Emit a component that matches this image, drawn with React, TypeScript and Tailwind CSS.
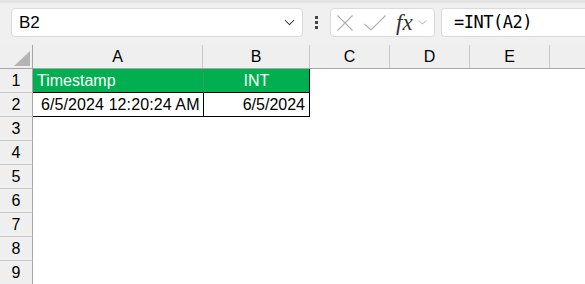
import { ChevronDown } from "lucide-react";

const cols = [
  { label: "A", w: "w-[170px]" },
  { label: "B", w: "w-[107px]" },
  { label: "C", w: "w-[80px]" },
  { label: "D", w: "w-[80px]" },
  { label: "E", w: "w-[80px]" },
];

export default function App() {
  const rows = [3, 4, 5, 6, 7, 8, 9];

  return (
    <div className="w-[585px] h-[284px] overflow-hidden bg-white font-['Liberation_Sans',Arial,sans-serif] text-black">
      {/* formula bar */}
      <div className="h-[45px] bg-[#f0f0f0] border-t-[3px] border-[#e4e4e4] flex items-start pt-[5px] pl-[11px]">
        <div className="w-[292px] h-[29px] bg-white rounded-[4px] border border-[#dadada] flex items-center pl-[7px] pr-[4px]">
          <span className="text-[17px] flex-1">B2</span>
          <ChevronDown size={17} strokeWidth={1.5} className="text-[#444]" />
        </div>
        <div className="w-[27px] h-[29px] flex items-center justify-center">
          <span className="flex flex-col gap-[2px]">
            <span className="w-[3px] h-[3px] bg-[#444]" />
            <span className="w-[3px] h-[3px] bg-[#444]" />
            <span className="w-[3px] h-[3px] bg-[#444]" />
          </span>
        </div>
        <div className="w-[105px] h-[29px] bg-white rounded-[4px] border border-[#dadada] flex items-center pl-[6px]">
          <svg width="16" height="16" viewBox="0 0 16 16" className="text-[#b0b0b0]">
            <path d="M0.5 0.5 L15.5 15.5 M15.5 0.5 L0.5 15.5" stroke="currentColor" strokeWidth="1.1" fill="none" />
          </svg>
          <svg width="22" height="16" viewBox="0 0 22 16" className="text-[#b0b0b0] ml-[11px]">
            <path d="M0.5 9 L7 15 L21.5 0.5" stroke="currentColor" strokeWidth="1.1" fill="none" />
          </svg>
          <span className="ml-[10px] text-[23px] italic font-['Liberation_Serif',serif] text-[#333] leading-none">fx</span>
          <ChevronDown size={13} strokeWidth={1.5} className="text-[#999] ml-[3px]" />
        </div>
        <div className="ml-[6px] flex-1 h-[29px] bg-white rounded-l-[4px] border border-r-0 border-[#dadada] flex items-center pl-[12px]">
          <span className="text-[17px] font-['DejaVu_Sans_Mono',monospace] tracking-[-0.5px]">=INT(A2)</span>
        </div>
      </div>

      {/* column headers */}
      <div className="flex h-[24px] bg-[#efefef] border-b border-[#a6a6a6]">
        <div className="w-[33px] border-r border-[#a6a6a6] relative">
          <div className="absolute left-[14px] bottom-[2px] w-0 h-0 border-l-[16px] border-l-transparent border-b-[15px] border-b-[#b4b4b4]" />
        </div>
        {cols.map((c) => (
          <div
            key={c.label}
            className={`${c.w} border-r border-[#c8c8c8] flex items-center justify-center text-[16px] pt-[1px]`}
          >
            {c.label}
          </div>
        ))}
        <div className="flex-1" />
      </div>

      {/* row 1 */}
      <div className="flex h-[24px]">
        <div className="w-[33px] bg-[#efefef] border-r border-b border-[#a6a6a6] border-b-[#c8c8c8] flex items-center justify-center text-[16px]">1</div>
        <div className="w-[170px] bg-[#00b050] text-white text-[16px] flex items-center pl-[4px] border-b border-black">Timestamp</div>
        <div className="w-[107px] bg-[#00b050] text-white text-[16px] flex items-center justify-center border-l border-r border-b border-black border-l-[#3c9a5f]">INT</div>
      </div>

      {/* row 2 */}
      <div className="flex h-[24px]">
        <div className="w-[33px] bg-[#efefef] border-r border-b border-[#a6a6a6] border-b-[#c8c8c8] flex items-center justify-center text-[16px]">2</div>
        <div className="w-[170px] text-[16px] flex items-center pl-[8px] border-b border-black tracking-[0.1px]">6/5/2024 12:20:24 AM</div>
        <div className="w-[107px] text-[16px] flex items-center justify-end pr-[4px] border-l border-r border-b border-black">6/5/2024</div>
      </div>

      {rows.map((r) => (
        <div key={r} className="flex h-[24px]">
          <div className="w-[33px] bg-[#efefef] border-r border-b border-[#a6a6a6] border-b-[#c8c8c8] flex items-center justify-center text-[16px]">
            {r}
          </div>
        </div>
      ))}
    </div>
  );
}
